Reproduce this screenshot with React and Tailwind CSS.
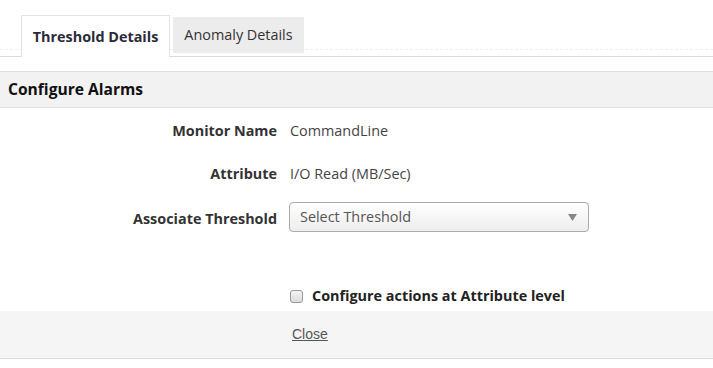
export default function App() {
  return (
    <div className="w-[713px] h-[368px] bg-white text-[#333]" style={{ fontFamily: '"Open Sans", sans-serif' }}>
      <div className="h-[15px]" />
      <div className="relative flex h-[42px] items-start pl-[21px] border-b border-[#dcdcdc]">
        <div className="absolute left-0 right-0 top-[34px] border-t border-dashed border-[#f0f0f0]" />
        <div className="relative z-10 flex h-[42px] w-[149px] items-center justify-center border border-b-0 border-[#e2e2e2] bg-white text-[14.4px] font-bold text-[#2b2b3a] -mb-px">
          Threshold Details
        </div>
        <div className="relative z-10 ml-[3px] mt-[2px] flex h-[36px] w-[131px] items-center justify-center bg-[#ececec] text-[14.4px] text-[#333]">
          Anomaly Details
        </div>
      </div>
      <div className="h-[14px]" />
      <div className="flex h-[37px] items-center border-y border-[#dedede] bg-[#f2f2f2] pl-[8px] text-[15.6px] font-bold text-[#111]">
        Configure Alarms
      </div>
      <div className="grid grid-cols-[277px_1fr] gap-x-[13px]">
        <div className="flex h-[44px] items-center justify-end pt-[1px] text-[14.4px] font-bold text-[#333]">Monitor Name</div>
        <div className="flex h-[44px] items-center pt-[1px] text-[14.4px] text-[#444]">CommandLine</div>
        <div className="flex h-[43px] items-center justify-end text-[14.4px] font-bold text-[#333]">Attribute</div>
        <div className="flex h-[43px] items-center text-[14.4px] text-[#444]">I/O Read (MB/Sec)</div>
        <div className="flex h-[46px] items-center justify-end pt-[2px] text-[14.4px] font-bold text-[#333]">Associate Threshold</div>
        <div className="flex h-[46px] items-center -mt-[1px] -ml-[1px]">
          <div className="flex h-[30px] w-[300px] items-center justify-between rounded-[4px] border border-[#aaa] bg-gradient-to-b from-white to-[#ededed] pl-[10px] pr-[11px] text-[14.4px] text-[#555]">
            <span>Select Threshold</span>
            <svg width="9" height="7" viewBox="0 0 9 7"><path d="M0 0 L9 0 L4.5 7 Z" fill="#888" /></svg>
          </div>
        </div>
      </div>
      <div className="h-[40px]" />
      <div className="flex h-[30px] items-center pl-[290px]">
        <span className="inline-block h-[13px] w-[13px] rounded-[3px] border border-[#999] bg-gradient-to-b from-[#f4f4f4] to-[#dcdcdc]" />
        <span className="ml-[9px] text-[14.4px] font-bold text-[#222]">Configure actions at Attribute level</span>
      </div>
      <div className="flex h-[48px] items-center border-b border-[#dedede] bg-[#f5f5f5] pl-[292px]">
        <a className="text-[14px] text-[#555] underline" style={{ fontFamily: '"Liberation Sans", Arial, sans-serif' }}>Close</a>
      </div>
    </div>
  );
}
